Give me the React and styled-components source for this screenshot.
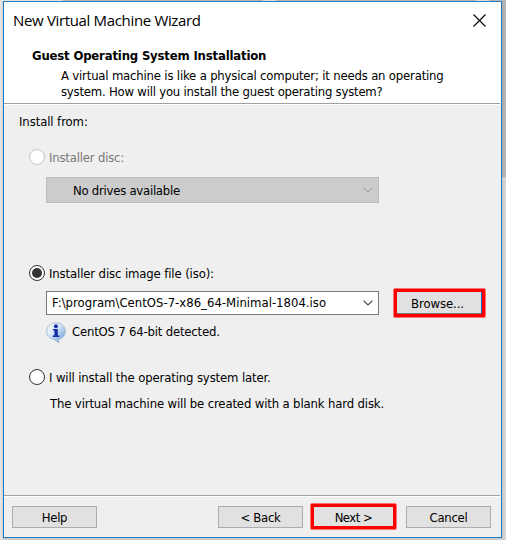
import React from 'react';
import styled, { createGlobalStyle, css } from 'styled-components';

const GlobalStyle = createGlobalStyle`
  *, *::before, *::after { box-sizing: border-box; }
  body { margin: 0; }
`;

const Desktop = styled.div`
  width: 506px;
  height: 540px;
  padding: 1px 4px 2px 3px;
  overflow: hidden;
  background:
    linear-gradient(90deg, #e2e2e2 63px, #b5b5b5 63px 263px, #dedede 263px 276px, #b5b5b5 276px 476px, #dedede 476px 489px, #b5b5b5 489px) 0 0 / 506px 1px no-repeat,
    linear-gradient(90deg, #a9a9a9, #b8b8b8) 502px 0 / 4px 177px no-repeat,
    linear-gradient(90deg, #c6c6c6, #dadada) 502px 177px / 4px 363px no-repeat,
    linear-gradient(90deg, #e8e8e8, #d2d2d2) 0 0 / 3px 540px no-repeat,
    #c9c9c9;
  font: 13px/16px 'DejaVu Sans Condensed', 'DejaVu Sans', sans-serif;
  color: #000;
`;

const Dialog = styled.main`
  display: flex;
  flex-direction: column;
  width: 499px;
  height: 537px;
  border: 1px solid #1f7cc4;
  background: #efefef;
`;

const Header = styled.header`
  height: 101px;
  padding-right: 15px;
  background: #fff;
`;

const TitleBar = styled.div`
  display: flex;
  justify-content: space-between;
  height: 46px;
  padding: 7px 0 0 9px;
`;

const Title = styled.h1`
  margin: 0;
  font: 400 15px/22px 'Open Sans', sans-serif;
  letter-spacing: -0.34px;
`;

const CloseButton = styled.button`
  display: flex;
  height: 14px;
  margin: 5px 0 0;
  padding: 0;
  border: 0;
  background: none;
`;

const Heading = styled.h2`
  margin: 0 0 4px 28px;
  font-size: 13px;
  line-height: 16px;
  letter-spacing: -0.18px;
`;

const Text = styled.div`
  white-space: pre;
  letter-spacing: ${(p) => p.$tracking ?? -0.15}px;
`;

const Intro = styled.div`
  padding-left: 57px;
`;

const Rule = styled.hr`
  width: 496px;
  height: 2px;
  margin: 0;
  border: 0;
  border-top: 1px solid #a0a0a0;
  background: #fff;
`;

const Body = styled.section`
  flex: 1;
  padding: 9px 0 0 15px;
`;

const Option = styled.div`
  display: flex;
  align-items: center;
  gap: 4px;
  width: 300px;
  height: 16px;
  margin: ${(p) => p.$gap}px 0 0 10px;
  color: ${(p) => (p.$disabled ? '#787878' : '#000')};

  ${Text} {
    padding-top: 2px;
  }
`;

const Radio = styled.span`
  display: grid;
  place-items: center;
  flex: none;
  width: 16px;
  height: 16px;
  border: 1px solid ${(p) => (p.$disabled ? '#c3c3c3' : '#333')};
  border-radius: 50%;
  background: #fff;
  ${(p) =>
    p.$checked &&
    css`
      &::after {
        content: '';
        width: 10px;
        height: 10px;
        border-radius: 50%;
        background: #333;
      }
    `}
`;

const Combo = styled.div`
  display: flex;
  align-items: center;
  justify-content: space-between;
  width: 333px;
  height: ${(p) => (p.$disabled ? 26 : 24)}px;
  padding: 0 5px 0 ${(p) => (p.$disabled ? 26 : 5)}px;
  border: 1px solid ${(p) => (p.$disabled ? '#bfbfbf' : '#7a7a7a')};
  background: ${(p) => (p.$disabled ? '#ccc' : '#fff')};

  ${Text} {
    padding-top: ${(p) => (p.$disabled ? 2 : 0)}px;
  }
`;

const DriveRow = styled.div`
  padding: 12px 0 0 27px;
`;

const FileRow = styled.div`
  display: flex;
  align-items: center;
  gap: 14px;
  height: 30px;
  margin-top: 7px;
  padding-left: 27px;
`;

const Status = styled.div`
  display: flex;
  align-items: center;
  gap: 6px;
  height: 22px;
  margin-top: 3px;
  padding-left: 27px;
`;

const Note = styled.div`
  margin: 11px 0 0 31px;
`;

const Button = styled.button`
  flex: none;
  width: 85px;
  height: 22px;
  margin: 0;
  padding: 2px 0 0;
  border: 1px solid #adadad;
  background: #e1e1e1;
  color: inherit;
  font: inherit;
  line-height: 18px;
  letter-spacing: ${(p) => p.$tracking ?? -0.3}px;
`;

const Highlight = styled.div`
  display: flex;
  flex: none;
  width: ${(p) => p.$width}px;
  height: ${(p) => p.$height}px;
  border: 1px solid #ff7474;
  border-radius: 2px;
  background: #ff0000;
  padding: 3px;

  ${Button} {
    width: 100%;
    height: 100%;
    border: 0;
    ${(p) =>
      p.$focused &&
      css`
        padding-right: 3px;
        border-right: 1px solid #0067c0;
        border-bottom: 1px solid #777;
      `}
  }
`;

const Footer = styled.footer`
  display: flex;
  align-items: center;
  height: 40px;
  padding: 0 10px 0 8px;
`;

const BackSlot = styled.div`
  display: flex;
  margin: 0 7px 0 auto;
`;

const NextSlot = styled.div`
  display: flex;
  margin: 0 9px 1px 0;
`;

function Chevron({ color }) {
  return (
    <svg width="10" height="6" viewBox="0 0 10 6" fill="none" stroke={color} strokeWidth="1.1">
      <path d="M.6.6 5 5 9.4.6" />
    </svg>
  );
}

function InfoIcon() {
  return (
    <svg width="20" height="21" viewBox="0 0 20 21">
      <defs>
        <linearGradient id="bubble" x1="0" y1="0" x2="1" y2="1">
          <stop offset="0" stopColor="#fff" />
          <stop offset=".4" stopColor="#dcebfa" />
          <stop offset="1" stopColor="#5b93d6" />
        </linearGradient>
      </defs>
      <path
        d="M10 .8C4.700.8.7 4.500.7 9.200c0 4.100 2.900 7.300 7 8.100l5.100 3.300v-3.400c3.800-.9 6.500-4 6.500-8C19.300 4.500 15.300.8 10 .8z"
        fill="url(#bubble)"
        stroke="#9db3cc"
        strokeWidth=".9"
      />
      <circle cx="9.900" cy="4.200" r="2" fill="#172fa5" />
      <path d="M6.900 7.100h4.900v6.300h1.500v1.500H6.800v-1.500h1.600V8.600H6.900z" fill="#172fa5" />
    </svg>
  );
}

export default function App() {
  return (
    <>
      <GlobalStyle />
      <Desktop>
        <Dialog>
          <Header>
            <TitleBar>
              <Title>New Virtual Machine Wizard</Title>
              <CloseButton aria-label="Close">
                <svg width="13" height="13" viewBox="0 0 13 13" stroke="#000" strokeWidth="1.1">
                  <path d="M.5.5l12 12M12.500.5l-12 12" />
                </svg>
              </CloseButton>
            </TitleBar>
            <Heading>Guest Operating System Installation</Heading>
            <Intro>
              <Text $tracking={-0.19}>A virtual machine is like a physical computer; it needs an operating</Text>
              <Text $tracking={-0.22}>system. How will you install the guest operating system?</Text>
            </Intro>
          </Header>
          <Rule />
          <Body>
            <Text $tracking={-0.1}>Install from:</Text>
            <Option $gap={19} $disabled>
              <Radio $disabled />
              <Text $tracking={-0.2}>Installer disc:</Text>
            </Option>
            <DriveRow>
              <Combo $disabled>
                <Text $tracking={-0.26}>No drives available</Text>
                <Chevron color="#a6a6a6" />
              </Combo>
            </DriveRow>
            <Option $gap={62}>
              <Radio $checked />
              <Text $tracking={-0.13}>Installer disc image file (iso):</Text>
            </Option>
            <FileRow>
              <Combo>
                <Text $tracking={0}>F:\program\CentOS-7-x86_64-Minimal-1804.iso</Text>
                <Chevron color="#444" />
              </Combo>
              <Highlight $width={93} $height={30} $focused>
                <Button $tracking={-0.1}>Browse...</Button>
              </Highlight>
            </FileRow>
            <Status>
              <InfoIcon />
              <Text $tracking={-0.2}>CentOS 7 64-bit detected.</Text>
            </Status>
            <Option $gap={26}>
              <Radio />
              <Text $tracking={-0.14}>I will install the operating system later.</Text>
            </Option>
            <Note>
              <Text $tracking={-0.15}>The virtual machine will be created with a blank hard disk.</Text>
            </Note>
          </Body>
          <Rule />
          <Footer>
            <Button $tracking={-0.3}>Help</Button>
            <BackSlot>
              <Button>{'< Back'}</Button>
            </BackSlot>
            <NextSlot>
              <Highlight $width={87} $height={27}>
                <Button $tracking={-0.5}>{'Next >'}</Button>
              </Highlight>
            </NextSlot>
            <Button>Cancel</Button>
          </Footer>
        </Dialog>
      </Desktop>
    </>
  );
}
